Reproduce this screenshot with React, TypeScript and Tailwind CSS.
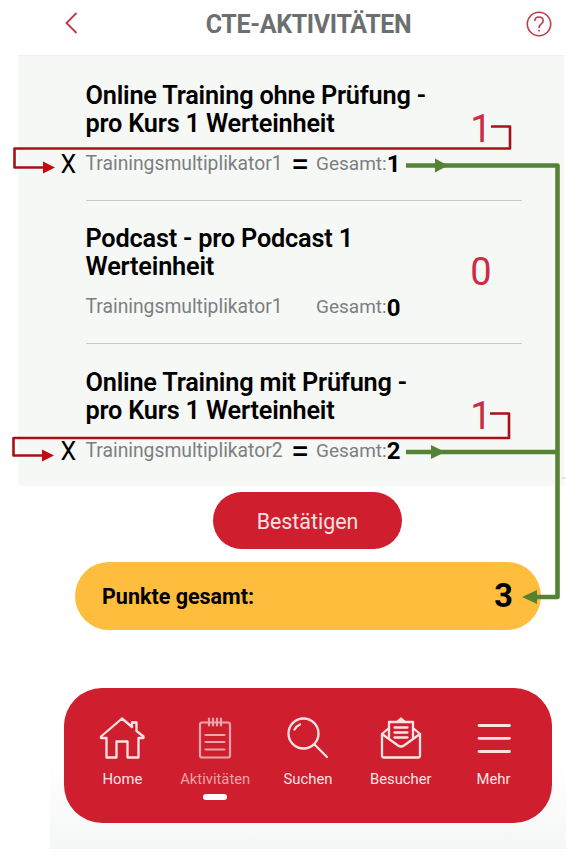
import type { ReactNode } from "react";

type Activity = {
  title: [string, string];
  count: number;
  multiplier: number;
  total: number;
  counted: boolean;
};

const activities: Activity[] = [
  {
    title: ["Online Training ohne Prüfung -", "pro Kurs 1 Werteinheit"],
    count: 1,
    multiplier: 1,
    total: 1,
    counted: true,
  },
  {
    title: ["Podcast - pro Podcast 1", "Werteinheit"],
    count: 0,
    multiplier: 1,
    total: 0,
    counted: false,
  },
  {
    title: ["Online Training mit Prüfung -", "pro Kurs 1 Werteinheit"],
    count: 1,
    multiplier: 2,
    total: 2,
    counted: true,
  },
];

function ActivityRow({ item, last }: { item: Activity; last: boolean }) {
  return (
    <li
      className={`relative h-[143.5px] pt-[24.5px] ${last ? "" : "border-b border-[#c9cbca]"}`}
    >
      <div className="flex h-14 justify-between">
        <h2 className="whitespace-nowrap text-[25.3px] leading-[28px] font-semibold tracking-[-0.2px] text-black">
          {item.title[0]}
          <br />
          {item.title[1]}
        </h2>
        <span className="mt-[24px] mr-[30px] w-[22px] text-center text-[38px] leading-[46px] text-[#cb2c42]">
          {item.count}
        </span>
      </div>
      <div className="mt-[13.5px] flex h-[26px] items-center whitespace-nowrap text-[19px] text-[#7b7f81]">
        {item.counted && (
          <span className="absolute left-[-25px] text-[25px] leading-[27px] text-black">
            X
          </span>
        )}
        <span className="w-[205.5px] text-[19.3px]">
          Trainingsmultiplikator{item.multiplier}
        </span>
        <span className="w-[25px] text-[33px] leading-none text-black">
          {item.counted ? "=" : ""}
        </span>
        <span>Gesamt:</span>
        <span className="text-[24px] leading-none font-bold text-black">
          {item.total}
        </span>
      </div>
    </li>
  );
}

function HomeIcon() {
  return (
    <svg width="46" height="44" viewBox="0 0 46 44" fill="none" stroke="currentColor" strokeWidth="2.3" strokeLinejoin="round">
      <path d="M23 2.500L33 11V6.500H37.500V15L44.500 20.500V22H39.500V41.500H28.500V25.500H17.500V41.500H7.500V22H2V20.500Z" />
    </svg>
  );
}

function NotepadIcon() {
  return (
    <svg width="46" height="44" viewBox="0 0 46 44" fill="none" stroke="currentColor" strokeWidth="2.2" strokeLinecap="round">
      <rect x="8" y="6.500" width="30" height="35" rx="2" />
      <path d="M17 2.500V9.500M21 2.500V9.500M25 2.500V9.500M29 2.500V9.500M13.500 19H32.500M13.500 26H32.500M13.500 33.500H32.500" />
    </svg>
  );
}

function SearchIcon() {
  return (
    <svg width="46" height="44" viewBox="0 0 46 44" fill="none" stroke="currentColor" strokeWidth="2.3" strokeLinecap="round">
      <circle cx="18.500" cy="17.500" r="15" />
      <path d="M9.500 13.500Q11.500 10 15 8.500M29.500 28.500L42 41" />
    </svg>
  );
}

function MailIcon() {
  return (
    <svg width="46" height="44" viewBox="0 0 46 44" fill="none" stroke="currentColor" strokeWidth="2.3" strokeLinecap="round" strokeLinejoin="round">
      <path d="M11 12L4 18V39.500Q4 41.500 6 41.500H40Q42 41.500 42 39.500V18L35 12" />
      <path d="M4 18L20 29.500Q23 31.500 26 29.500L42 18" />
      <path d="M11 22.500V6H35V22.500M16.500 11.500H29.500M16.500 16.500H29.500M16.500 21.500H29.500" />
      <path d="M19.500 5.500L23 2.500L26.500 5.500Z" fill="currentColor" />
    </svg>
  );
}

function MenuIcon() {
  return (
    <svg width="46" height="44" viewBox="0 0 46 44" fill="none" stroke="currentColor" strokeWidth="2.8" strokeLinecap="round">
      <path d="M8 9.500H38.500M8 22.300H38.500M8 35.500H38.500" />
    </svg>
  );
}

const tabs: { label: string; icon: ReactNode }[] = [
  { label: "Home", icon: <HomeIcon /> },
  { label: "Aktivitäten", icon: <NotepadIcon /> },
  { label: "Suchen", icon: <SearchIcon /> },
  { label: "Besucher", icon: <MailIcon /> },
  { label: "Mehr", icon: <MenuIcon /> },
];

// Arrows that explain how the points add up, drawn over the whole screen
function Annotations() {
  return (
    <svg className="pointer-events-none absolute inset-0" width="583" height="856" fill="none">
      <g stroke="#a80f17" strokeWidth="2.6" strokeLinejoin="round">
        <path d="M491 126.500H510V148.500H14.500V167.500H44" />
        <path d="M490 413.500H509V438H13.500V455.500H43" />
      </g>
      <g fill="#c00d12">
        <path d="M43 161.500L55 167.500L43 173.500Z" />
        <path d="M42 449.500L54 455.500L42 461.500Z" />
      </g>
      <g stroke="#558335" strokeWidth="4.600" strokeLinejoin="round">
        <path d="M406 165.500H557.500V597H536" />
        <path d="M406 452H557.500" />
      </g>
      <g fill="#558335">
        <path d="M435 158.500L448 165.500L435 172.500Z" />
        <path d="M431 445L445 452L431 459Z" />
        <path d="M537 590L522 597L537 604Z" />
      </g>
      <path d="M562 478H566" stroke="#cfd1d0" />
    </svg>
  );
}

export default function App() {
  return (
    <div className="relative h-[856px] w-[583px] overflow-hidden bg-white font-['Roboto',sans-serif]">
      <header className="flex h-[55px] items-center justify-between pr-[31px] pl-[64px]">
        <svg width="14" height="22" viewBox="0 0 14 22" fill="none" stroke="#c03a4c" strokeWidth="1.900" className="-mt-2.5">
          <path d="M12.500 1L2.500 11L12.500 21" />
        </svg>
        <h1 className="-mt-1.5 ml-[13px] text-[25px] leading-[30px] font-bold tracking-[-0.35px] text-[#6c6f70]">
          CTE-AKTIVITÄTEN
        </h1>
        <svg width="26" height="26" viewBox="0 0 26 26" fill="none" stroke="#c03a4c" strokeWidth="1.600" className="-mt-2">
          <circle cx="13" cy="13" r="11.700" />
          <path d="M8.800 10C8.800 4.800 17.200 4.800 17.200 9.800C17.200 13 13 13 13 17M13 18.800V20.500" />
        </svg>
      </header>

      <main className="flex flex-col">
        <ul className="ml-[18px] h-[431px] w-[546px] border-t border-[#eeefee] bg-[#f6f8f6] pt-px pr-[42px] pl-[67.5px]">
          {activities.map((item, i) => (
            <ActivityRow key={i} item={item} last={i === activities.length - 1} />
          ))}
        </ul>
        <button className="mt-[6px] ml-[213px] h-[57px] w-[189px] rounded-full bg-[#cf1e2e] pt-[3px] text-[21.4px] text-[#fde0e2]">
          Bestätigen
        </button>
        <div className="mt-[13px] ml-[75px] flex h-[68px] w-[466px] items-center justify-between rounded-full bg-[#ffbd3e] pt-[3px] pr-[28px] pl-[27px] text-black">
          <span className="text-[21.5px] font-bold">Punkte gesamt:</span>
          <span className="-mt-0.5 text-[32.5px] font-bold">3</span>
        </div>
      </main>

      <div className="ml-[50px] h-[219px] w-[516px] bg-linear-to-b from-white from-60% to-[#f5f7f6] pt-[58px] pl-[14px]">
        <nav className="flex h-[135px] w-[488px] rounded-[38px] bg-[#cf1e2e] px-3 pt-[28px]">
          {tabs.map(({ label, icon }) => {
            const active = label === "Aktivitäten";
            return (
              <a
                key={label}
                className={`flex flex-1 flex-col items-center ${active ? "text-[#efa3a6]" : "text-[#ffe3e4]"}`}
              >
                {icon}
                <span className="mt-[9px] text-[14.8px] leading-[20px]">{label}</span>
                {active && <span className="mt-[5px] h-[6px] w-6 rounded-full bg-white" />}
              </a>
            );
          })}
        </nav>
      </div>

      <Annotations />
    </div>
  );
}
